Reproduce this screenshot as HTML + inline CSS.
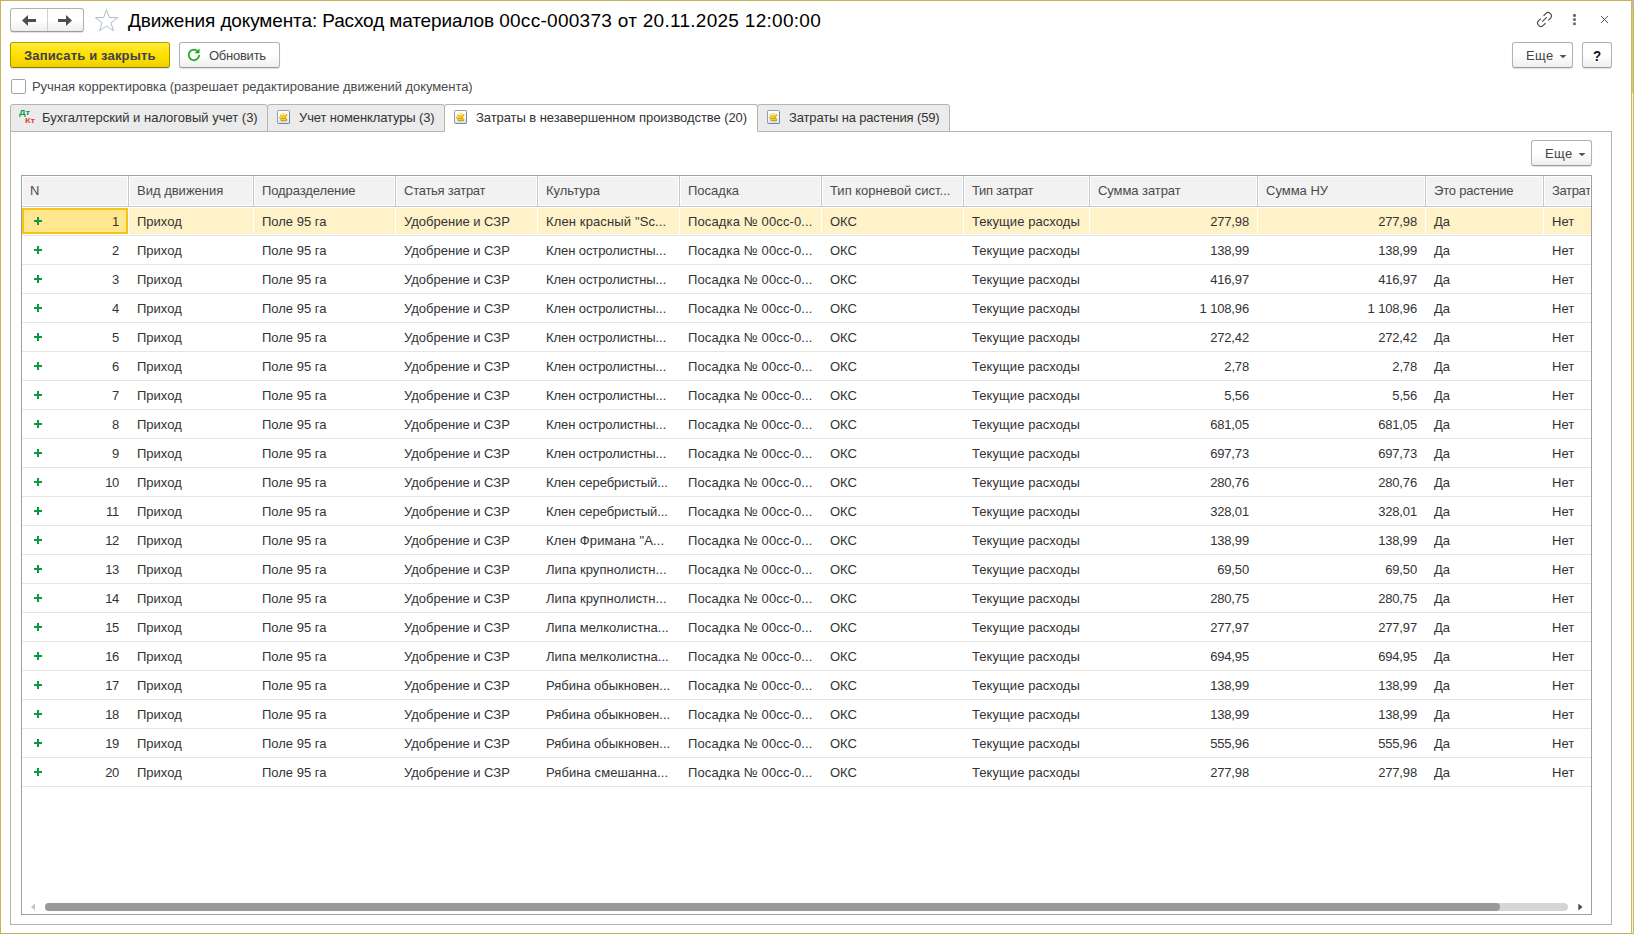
<!DOCTYPE html>
<html lang="ru"><head><meta charset="utf-8"><title>Движения документа</title>
<style>
*{box-sizing:border-box;margin:0;padding:0}
html,body{width:1634px;height:934px;overflow:hidden;background:#fff}
body{position:relative;font-family:"Liberation Sans",sans-serif;font-size:13px;color:#333}
.frame{position:absolute;left:0;top:0;width:1634px;height:934px;border-left:1px solid #c6b45d;border-top:1px solid #c4b25a;border-bottom:1px solid #c6b45d}
.fr1{position:absolute;left:1631px;top:0;width:1px;height:934px;background:#c8b863}
.fr2{position:absolute;left:1632px;top:0;width:1px;height:934px;background:linear-gradient(#c4b25a 0,#c4b25a 1px,#b9c2d3 1px,#b0b8cc 9px,#d6c670 9px,#d6c670 93px,#f4f0de 93px,#f4f0de 933px,#c6b45d 933px)}
.fr3{position:absolute;left:1633px;top:0;width:1px;height:934px;background:#c9b962}
.abs{position:absolute}
svg{position:absolute;overflow:visible;z-index:5}
.btn{position:absolute;height:26px;border:1px solid #b2b2b2;border-bottom-color:#9c9c9c;border-radius:3px;background:linear-gradient(#ffffff 0%,#ffffff 50%,#eeeeee 100%);box-shadow:0 1px 1px rgba(0,0,0,.13);color:#444;font-size:13px;line-height:25px;white-space:nowrap}
.btn.y{background:linear-gradient(#ffea3a 0%,#ffe100 50%,#f0d000 100%);border-color:#b59e00 #a89100 #8f7a00;color:#3e4150;font-weight:bold;box-shadow:0 1px 1px rgba(70,70,120,.16)}
.btn b{position:absolute;top:0;font-weight:inherit}
.title{position:absolute;left:128px;top:10px;font-size:19px;line-height:22px;color:#000;white-space:nowrap;letter-spacing:0.075px}
.chk{position:absolute;left:11px;top:79px;width:15px;height:15px;border:1px solid #a3a3a3;border-radius:2px;background:#fff}
.chklbl{position:absolute;left:32px;top:79px;line-height:15px;font-size:13px;color:#4a4a4a;white-space:nowrap;letter-spacing:-0.06px}
.tab{position:absolute;top:104px;height:28px;border:1px solid #b4b4b4;border-radius:3px 3px 0 0;background:#ebebeb;font-size:13px;line-height:26px;color:#333;white-space:nowrap}
.tab.act{background:#fff;border-bottom-color:#fff;z-index:3}
.tab b{position:absolute;top:0;font-weight:normal}
.panel{position:absolute;left:10px;top:131px;width:1602px;height:794px;border:1px solid #b4b4b4;background:#fff}
.grid{position:absolute;left:21px;top:175px;width:1571px;height:740px;border:1px solid #a0a0a0;background:#fff;overflow:hidden}
.ghead{position:absolute;left:0;top:0;width:1569px;height:31px;background:#fff;border-bottom:1px solid #c8c8c8}
.hc{position:absolute;top:0;height:30px;border:1px solid #fff;background:#f2f2f2;line-height:28px;padding-left:7px;color:#4a4a4a;white-space:nowrap;overflow:hidden}
.hs{position:absolute;top:0;width:1px;height:31px;background:#c6c6c6}
.row{position:absolute;left:0;width:1569px;height:29px;border-bottom:1px solid #e6e6e6}
.c{position:absolute;top:0;height:28px;line-height:29px;padding-left:8px;white-space:nowrap;overflow:hidden;color:#333}
.c.num{text-align:right;padding-right:8px;padding-left:0;word-spacing:0.2px}
.c0{text-align:right;padding-right:9px;padding-left:0;letter-spacing:-0.3px}
.plus{position:absolute;left:12px;top:10px;width:8px;height:8px}
.plus:before{content:"";position:absolute;left:0;top:3px;width:8px;height:2px;background:#0c9a3e}
.plus:after{content:"";position:absolute;left:3px;top:0;width:2px;height:8px;background:#0c9a3e}
.row.sel .c{top:1px;height:26px;line-height:27px;background:#fff2c9}
.row.sel .c0{background:#ffe68f;border:2px solid #f6c414;line-height:23px;padding-right:7px}
.row.sel .plus{left:10px;top:7px}
.dk{position:absolute;font-size:8px;line-height:10px;font-weight:bold;z-index:4;transform:scaleX(1.14);transform-origin:0 0}
</style></head>
<body>
<div class="frame"></div><div class="fr1"></div><div class="fr2"></div><div class="fr3"></div>
<div class="btn" style="left:10px;top:8px;width:74px;height:24px"></div>
<div class="abs" style="left:47px;top:9px;width:1px;height:22px;background:#cfcfcf"></div>
<svg style="left:0;top:0" width="130" height="40" viewBox="0 0 130 40"><path d="M22 20.5L28 15V19H36V22H28V26Z" fill="#4d4d4d"/><path d="M72 20.5L66 15V19H58V22H66V26Z" fill="#4d4d4d"/><polygon points="106.50,9.50 109.27,17.46 117.69,17.63 110.98,22.72 113.42,30.79 106.50,25.98 99.58,30.79 102.02,22.72 95.31,17.63 103.73,17.46" fill="#fff" stroke="#b4bdc5" stroke-width="1"/></svg>
<div class="title"><span style="letter-spacing:-0.125px">Движения документа: Расход материалов </span><span style="letter-spacing:0.285px">00сс-000373 от 20.11.2025 12:00:00</span></div>
<svg style="left:1530px;top:5px" width="90" height="30" viewBox="1530 5 90 30"><g transform="translate(1544.5 19.5) rotate(-45)" fill="none" stroke="#484848" stroke-width="1.15" stroke-linecap="butt"><path d="M-2 -3.3H-5A3.3 3.3 0 0 0 -5 3.3H-2"/><path d="M2 -3.3H5A3.3 3.3 0 0 1 5 3.3H2"/><path d="M-3.1 0H3.1"/></g><circle cx="1574.5" cy="15.4" r="1.55" fill="#6b6b6b"/><circle cx="1574.5" cy="19.55" r="1.55" fill="#6b6b6b"/><circle cx="1574.5" cy="23.7" r="1.55" fill="#6b6b6b"/><path d="M1601 16L1608 23M1608 16L1601 23" stroke="#555" stroke-width="1" fill="none"/></svg>
<div class="btn y" style="left:10px;top:42px;width:160px"><b style="left:13px;letter-spacing:0.15px">Записать и закрыть</b></div>
<div class="btn" style="left:179px;top:42px;width:101px"><b style="left:29px;letter-spacing:-0.25px">Обновить</b></div>
<svg style="left:184px;top:45px" width="20" height="20" viewBox="184 45 20 20"><path d="M196.73 50.5A5.25 5.25 0 1 0 199.15 55.68" fill="none" stroke="#2ba72b" stroke-width="1.8" stroke-linecap="round"/><polygon points="199.5,48.6 199.5,53.3 194.6,53.3" fill="#22a022"/></svg>
<div class="btn" style="left:1512px;top:42px;width:61px"><b style="left:13px;letter-spacing:0.4px">Еще</b></div>
<svg style="left:1559px;top:54px" width="8" height="5" viewBox="0 0 8 5"><path d="M0.5 1H7.5L4 4.3Z" fill="#555"/></svg>
<div class="btn" style="left:1582px;top:42px;width:30px;font-weight:bold;font-size:15.5px;color:#111"><b style="left:10px;top:0px;transform:scaleX(0.86);transform-origin:0 0">?</b></div>
<div class="chk"></div><div class="chklbl">Ручная корректировка (разрешает редактирование движений документа)</div>
<div class="panel"></div>
<div class="tab" style="left:10px;width:258px"><b style="left:31px">Бухгалтерский и налоговый учет (3)</b></div>
<div class="dk" style="left:19px;top:108px;color:#0c9a48">Дт</div>
<div class="dk" style="left:25px;top:116px;color:#e23b3b">Кт</div>
<div class="tab" style="left:267px;width:178px"><b style="left:31px;letter-spacing:-0.12px">Учет номенклатуры (3)</b></div>
<div class="tab act" style="left:444px;width:314px"><b style="left:31px;letter-spacing:-0.07px">Затраты в незавершенном производстве (20)</b></div>
<div class="tab" style="left:757px;width:193px"><b style="left:31px;letter-spacing:-0.15px">Затраты на растения (59)</b></div>
<svg style="left:277px;top:110px" width="13" height="14" viewBox="0 0 13 14"><defs><linearGradient id="cg1" x1="0" y1="0" x2="0" y2="1"><stop offset="0" stop-color="#ffffff"/><stop offset="0.55" stop-color="#f4f9fd"/><stop offset="1" stop-color="#cfe3f4"/></linearGradient></defs><rect x="0.5" y="0.5" width="12" height="13" rx="0.8" fill="url(#cg1)" stroke="#8aa3b8"/><path d="M12.5 1.5V12.5Q12.5 13.5 11.5 13.5H1.5" fill="none" stroke="#6f889c"/><ellipse cx="6.8" cy="9.7" rx="3.5" ry="1.6" fill="#d8950a"/><ellipse cx="6.5" cy="9.2" rx="3.0" ry="1.05" fill="#f6cf2c"/><ellipse cx="5.7" cy="7.5" rx="3.5" ry="1.5" fill="#db990c"/><ellipse cx="5.4" cy="7.0" rx="3.0" ry="1.0" fill="#fbe048"/><ellipse cx="6.8" cy="5.1" rx="3.6" ry="1.7" fill="#df9f10"/><ellipse cx="6.5" cy="4.6" rx="3.1" ry="1.2" fill="#fff16c"/></svg>
<svg style="left:454px;top:110px" width="13" height="14" viewBox="0 0 13 14"><defs><linearGradient id="cg2" x1="0" y1="0" x2="0" y2="1"><stop offset="0" stop-color="#ffffff"/><stop offset="0.55" stop-color="#f4f9fd"/><stop offset="1" stop-color="#cfe3f4"/></linearGradient></defs><rect x="0.5" y="0.5" width="12" height="13" rx="0.8" fill="url(#cg2)" stroke="#8aa3b8"/><path d="M12.5 1.5V12.5Q12.5 13.5 11.5 13.5H1.5" fill="none" stroke="#6f889c"/><ellipse cx="6.8" cy="9.7" rx="3.5" ry="1.6" fill="#d8950a"/><ellipse cx="6.5" cy="9.2" rx="3.0" ry="1.05" fill="#f6cf2c"/><ellipse cx="5.7" cy="7.5" rx="3.5" ry="1.5" fill="#db990c"/><ellipse cx="5.4" cy="7.0" rx="3.0" ry="1.0" fill="#fbe048"/><ellipse cx="6.8" cy="5.1" rx="3.6" ry="1.7" fill="#df9f10"/><ellipse cx="6.5" cy="4.6" rx="3.1" ry="1.2" fill="#fff16c"/></svg>
<svg style="left:767px;top:110px" width="13" height="14" viewBox="0 0 13 14"><defs><linearGradient id="cg3" x1="0" y1="0" x2="0" y2="1"><stop offset="0" stop-color="#ffffff"/><stop offset="0.55" stop-color="#f4f9fd"/><stop offset="1" stop-color="#cfe3f4"/></linearGradient></defs><rect x="0.5" y="0.5" width="12" height="13" rx="0.8" fill="url(#cg3)" stroke="#8aa3b8"/><path d="M12.5 1.5V12.5Q12.5 13.5 11.5 13.5H1.5" fill="none" stroke="#6f889c"/><ellipse cx="6.8" cy="9.7" rx="3.5" ry="1.6" fill="#d8950a"/><ellipse cx="6.5" cy="9.2" rx="3.0" ry="1.05" fill="#f6cf2c"/><ellipse cx="5.7" cy="7.5" rx="3.5" ry="1.5" fill="#db990c"/><ellipse cx="5.4" cy="7.0" rx="3.0" ry="1.0" fill="#fbe048"/><ellipse cx="6.8" cy="5.1" rx="3.6" ry="1.7" fill="#df9f10"/><ellipse cx="6.5" cy="4.6" rx="3.1" ry="1.2" fill="#fff16c"/></svg>
<div class="btn" style="left:1531px;top:140px;width:61px"><b style="left:13px;letter-spacing:0.4px">Еще</b></div>
<svg style="left:1578px;top:152px" width="8" height="5" viewBox="0 0 8 5"><path d="M0.5 1H7.5L4 4.3Z" fill="#555"/></svg>
<div class="grid">
<div class="ghead">
<div class="hc" style="left:0px;width:106px">N</div>
<div class="hc" style="left:107px;width:124px">Вид движения</div><div class="hs" style="left:106px"></div>
<div class="hc" style="left:232px;width:141px;letter-spacing:-0.1px">Подразделение</div><div class="hs" style="left:231px"></div>
<div class="hc" style="left:374px;width:141px;letter-spacing:-0.25px">Статья затрат</div><div class="hs" style="left:373px"></div>
<div class="hc" style="left:516px;width:141px">Культура</div><div class="hs" style="left:515px"></div>
<div class="hc" style="left:658px;width:141px">Посадка</div><div class="hs" style="left:657px"></div>
<div class="hc" style="left:800px;width:141px">Тип корневой сист...</div><div class="hs" style="left:799px"></div>
<div class="hc" style="left:942px;width:125px;letter-spacing:-0.3px">Тип затрат</div><div class="hs" style="left:941px"></div>
<div class="hc" style="left:1068px;width:167px;letter-spacing:-0.07px">Сумма затрат</div><div class="hs" style="left:1067px"></div>
<div class="hc" style="left:1236px;width:167px">Сумма НУ</div><div class="hs" style="left:1235px"></div>
<div class="hc" style="left:1404px;width:117px;letter-spacing:-0.2px">Это растение</div><div class="hs" style="left:1403px"></div>
<div class="hc" style="left:1522px;width:47px;letter-spacing:-0.35px">Затраты</div><div class="hs" style="left:1521px"></div>
</div>
<div class="row sel" style="top:31px">
<div class="c c0" style="left:0px;width:106px"><i class="plus"></i>1</div><div class="c" style="left:107px;width:124px">Приход</div><div class="c" style="left:232px;width:141px">Поле 95 га</div><div class="c" style="left:374px;width:141px">Удобрение и СЗР</div><div class="c" style="left:516px;width:141px;letter-spacing:0.13px">Клен красный "Sc...</div><div class="c" style="left:658px;width:141px;letter-spacing:0.13px">Посадка № 00сс-0...</div><div class="c" style="left:800px;width:141px">ОКС</div><div class="c" style="left:942px;width:125px;letter-spacing:0.07px">Текущие расходы</div><div class="c num" style="left:1068px;width:167px;letter-spacing:-0.15px">277,98</div><div class="c num" style="left:1236px;width:167px;letter-spacing:-0.15px">277,98</div><div class="c" style="left:1404px;width:117px">Да</div><div class="c" style="left:1522px;width:47px">Нет</div>
</div>
<div class="row" style="top:60px">
<div class="c c0" style="left:0px;width:106px"><i class="plus"></i>2</div><div class="c" style="left:107px;width:124px">Приход</div><div class="c" style="left:232px;width:141px">Поле 95 га</div><div class="c" style="left:374px;width:141px">Удобрение и СЗР</div><div class="c" style="left:516px;width:141px;letter-spacing:-0.08px">Клен остролистны...</div><div class="c" style="left:658px;width:141px;letter-spacing:0.13px">Посадка № 00сс-0...</div><div class="c" style="left:800px;width:141px">ОКС</div><div class="c" style="left:942px;width:125px;letter-spacing:0.07px">Текущие расходы</div><div class="c num" style="left:1068px;width:167px;letter-spacing:-0.15px">138,99</div><div class="c num" style="left:1236px;width:167px;letter-spacing:-0.15px">138,99</div><div class="c" style="left:1404px;width:117px">Да</div><div class="c" style="left:1522px;width:47px">Нет</div>
</div>
<div class="row" style="top:89px">
<div class="c c0" style="left:0px;width:106px"><i class="plus"></i>3</div><div class="c" style="left:107px;width:124px">Приход</div><div class="c" style="left:232px;width:141px">Поле 95 га</div><div class="c" style="left:374px;width:141px">Удобрение и СЗР</div><div class="c" style="left:516px;width:141px;letter-spacing:-0.08px">Клен остролистны...</div><div class="c" style="left:658px;width:141px;letter-spacing:0.13px">Посадка № 00сс-0...</div><div class="c" style="left:800px;width:141px">ОКС</div><div class="c" style="left:942px;width:125px;letter-spacing:0.07px">Текущие расходы</div><div class="c num" style="left:1068px;width:167px;letter-spacing:-0.15px">416,97</div><div class="c num" style="left:1236px;width:167px;letter-spacing:-0.15px">416,97</div><div class="c" style="left:1404px;width:117px">Да</div><div class="c" style="left:1522px;width:47px">Нет</div>
</div>
<div class="row" style="top:118px">
<div class="c c0" style="left:0px;width:106px"><i class="plus"></i>4</div><div class="c" style="left:107px;width:124px">Приход</div><div class="c" style="left:232px;width:141px">Поле 95 га</div><div class="c" style="left:374px;width:141px">Удобрение и СЗР</div><div class="c" style="left:516px;width:141px;letter-spacing:-0.08px">Клен остролистны...</div><div class="c" style="left:658px;width:141px;letter-spacing:0.13px">Посадка № 00сс-0...</div><div class="c" style="left:800px;width:141px">ОКС</div><div class="c" style="left:942px;width:125px;letter-spacing:0.07px">Текущие расходы</div><div class="c num" style="left:1068px;width:167px;letter-spacing:-0.15px">1 108,96</div><div class="c num" style="left:1236px;width:167px;letter-spacing:-0.15px">1 108,96</div><div class="c" style="left:1404px;width:117px">Да</div><div class="c" style="left:1522px;width:47px">Нет</div>
</div>
<div class="row" style="top:147px">
<div class="c c0" style="left:0px;width:106px"><i class="plus"></i>5</div><div class="c" style="left:107px;width:124px">Приход</div><div class="c" style="left:232px;width:141px">Поле 95 га</div><div class="c" style="left:374px;width:141px">Удобрение и СЗР</div><div class="c" style="left:516px;width:141px;letter-spacing:-0.08px">Клен остролистны...</div><div class="c" style="left:658px;width:141px;letter-spacing:0.13px">Посадка № 00сс-0...</div><div class="c" style="left:800px;width:141px">ОКС</div><div class="c" style="left:942px;width:125px;letter-spacing:0.07px">Текущие расходы</div><div class="c num" style="left:1068px;width:167px;letter-spacing:-0.15px">272,42</div><div class="c num" style="left:1236px;width:167px;letter-spacing:-0.15px">272,42</div><div class="c" style="left:1404px;width:117px">Да</div><div class="c" style="left:1522px;width:47px">Нет</div>
</div>
<div class="row" style="top:176px">
<div class="c c0" style="left:0px;width:106px"><i class="plus"></i>6</div><div class="c" style="left:107px;width:124px">Приход</div><div class="c" style="left:232px;width:141px">Поле 95 га</div><div class="c" style="left:374px;width:141px">Удобрение и СЗР</div><div class="c" style="left:516px;width:141px;letter-spacing:-0.08px">Клен остролистны...</div><div class="c" style="left:658px;width:141px;letter-spacing:0.13px">Посадка № 00сс-0...</div><div class="c" style="left:800px;width:141px">ОКС</div><div class="c" style="left:942px;width:125px;letter-spacing:0.07px">Текущие расходы</div><div class="c num" style="left:1068px;width:167px;letter-spacing:-0.15px">2,78</div><div class="c num" style="left:1236px;width:167px;letter-spacing:-0.15px">2,78</div><div class="c" style="left:1404px;width:117px">Да</div><div class="c" style="left:1522px;width:47px">Нет</div>
</div>
<div class="row" style="top:205px">
<div class="c c0" style="left:0px;width:106px"><i class="plus"></i>7</div><div class="c" style="left:107px;width:124px">Приход</div><div class="c" style="left:232px;width:141px">Поле 95 га</div><div class="c" style="left:374px;width:141px">Удобрение и СЗР</div><div class="c" style="left:516px;width:141px;letter-spacing:-0.08px">Клен остролистны...</div><div class="c" style="left:658px;width:141px;letter-spacing:0.13px">Посадка № 00сс-0...</div><div class="c" style="left:800px;width:141px">ОКС</div><div class="c" style="left:942px;width:125px;letter-spacing:0.07px">Текущие расходы</div><div class="c num" style="left:1068px;width:167px;letter-spacing:-0.15px">5,56</div><div class="c num" style="left:1236px;width:167px;letter-spacing:-0.15px">5,56</div><div class="c" style="left:1404px;width:117px">Да</div><div class="c" style="left:1522px;width:47px">Нет</div>
</div>
<div class="row" style="top:234px">
<div class="c c0" style="left:0px;width:106px"><i class="plus"></i>8</div><div class="c" style="left:107px;width:124px">Приход</div><div class="c" style="left:232px;width:141px">Поле 95 га</div><div class="c" style="left:374px;width:141px">Удобрение и СЗР</div><div class="c" style="left:516px;width:141px;letter-spacing:-0.08px">Клен остролистны...</div><div class="c" style="left:658px;width:141px;letter-spacing:0.13px">Посадка № 00сс-0...</div><div class="c" style="left:800px;width:141px">ОКС</div><div class="c" style="left:942px;width:125px;letter-spacing:0.07px">Текущие расходы</div><div class="c num" style="left:1068px;width:167px;letter-spacing:-0.15px">681,05</div><div class="c num" style="left:1236px;width:167px;letter-spacing:-0.15px">681,05</div><div class="c" style="left:1404px;width:117px">Да</div><div class="c" style="left:1522px;width:47px">Нет</div>
</div>
<div class="row" style="top:263px">
<div class="c c0" style="left:0px;width:106px"><i class="plus"></i>9</div><div class="c" style="left:107px;width:124px">Приход</div><div class="c" style="left:232px;width:141px">Поле 95 га</div><div class="c" style="left:374px;width:141px">Удобрение и СЗР</div><div class="c" style="left:516px;width:141px;letter-spacing:-0.08px">Клен остролистны...</div><div class="c" style="left:658px;width:141px;letter-spacing:0.13px">Посадка № 00сс-0...</div><div class="c" style="left:800px;width:141px">ОКС</div><div class="c" style="left:942px;width:125px;letter-spacing:0.07px">Текущие расходы</div><div class="c num" style="left:1068px;width:167px;letter-spacing:-0.15px">697,73</div><div class="c num" style="left:1236px;width:167px;letter-spacing:-0.15px">697,73</div><div class="c" style="left:1404px;width:117px">Да</div><div class="c" style="left:1522px;width:47px">Нет</div>
</div>
<div class="row" style="top:292px">
<div class="c c0" style="left:0px;width:106px"><i class="plus"></i>10</div><div class="c" style="left:107px;width:124px">Приход</div><div class="c" style="left:232px;width:141px">Поле 95 га</div><div class="c" style="left:374px;width:141px">Удобрение и СЗР</div><div class="c" style="left:516px;width:141px;letter-spacing:-0.06px">Клен серебристый...</div><div class="c" style="left:658px;width:141px;letter-spacing:0.13px">Посадка № 00сс-0...</div><div class="c" style="left:800px;width:141px">ОКС</div><div class="c" style="left:942px;width:125px;letter-spacing:0.07px">Текущие расходы</div><div class="c num" style="left:1068px;width:167px;letter-spacing:-0.15px">280,76</div><div class="c num" style="left:1236px;width:167px;letter-spacing:-0.15px">280,76</div><div class="c" style="left:1404px;width:117px">Да</div><div class="c" style="left:1522px;width:47px">Нет</div>
</div>
<div class="row" style="top:321px">
<div class="c c0" style="left:0px;width:106px"><i class="plus"></i>11</div><div class="c" style="left:107px;width:124px">Приход</div><div class="c" style="left:232px;width:141px">Поле 95 га</div><div class="c" style="left:374px;width:141px">Удобрение и СЗР</div><div class="c" style="left:516px;width:141px;letter-spacing:-0.06px">Клен серебристый...</div><div class="c" style="left:658px;width:141px;letter-spacing:0.13px">Посадка № 00сс-0...</div><div class="c" style="left:800px;width:141px">ОКС</div><div class="c" style="left:942px;width:125px;letter-spacing:0.07px">Текущие расходы</div><div class="c num" style="left:1068px;width:167px;letter-spacing:-0.15px">328,01</div><div class="c num" style="left:1236px;width:167px;letter-spacing:-0.15px">328,01</div><div class="c" style="left:1404px;width:117px">Да</div><div class="c" style="left:1522px;width:47px">Нет</div>
</div>
<div class="row" style="top:350px">
<div class="c c0" style="left:0px;width:106px"><i class="plus"></i>12</div><div class="c" style="left:107px;width:124px">Приход</div><div class="c" style="left:232px;width:141px">Поле 95 га</div><div class="c" style="left:374px;width:141px">Удобрение и СЗР</div><div class="c" style="left:516px;width:141px;letter-spacing:0.13px">Клен Фримана "A...</div><div class="c" style="left:658px;width:141px;letter-spacing:0.13px">Посадка № 00сс-0...</div><div class="c" style="left:800px;width:141px">ОКС</div><div class="c" style="left:942px;width:125px;letter-spacing:0.07px">Текущие расходы</div><div class="c num" style="left:1068px;width:167px;letter-spacing:-0.15px">138,99</div><div class="c num" style="left:1236px;width:167px;letter-spacing:-0.15px">138,99</div><div class="c" style="left:1404px;width:117px">Да</div><div class="c" style="left:1522px;width:47px">Нет</div>
</div>
<div class="row" style="top:379px">
<div class="c c0" style="left:0px;width:106px"><i class="plus"></i>13</div><div class="c" style="left:107px;width:124px">Приход</div><div class="c" style="left:232px;width:141px">Поле 95 га</div><div class="c" style="left:374px;width:141px">Удобрение и СЗР</div><div class="c" style="left:516px;width:141px;letter-spacing:0.06px">Липа крупнолистн...</div><div class="c" style="left:658px;width:141px;letter-spacing:0.13px">Посадка № 00сс-0...</div><div class="c" style="left:800px;width:141px">ОКС</div><div class="c" style="left:942px;width:125px;letter-spacing:0.07px">Текущие расходы</div><div class="c num" style="left:1068px;width:167px;letter-spacing:-0.15px">69,50</div><div class="c num" style="left:1236px;width:167px;letter-spacing:-0.15px">69,50</div><div class="c" style="left:1404px;width:117px">Да</div><div class="c" style="left:1522px;width:47px">Нет</div>
</div>
<div class="row" style="top:408px">
<div class="c c0" style="left:0px;width:106px"><i class="plus"></i>14</div><div class="c" style="left:107px;width:124px">Приход</div><div class="c" style="left:232px;width:141px">Поле 95 га</div><div class="c" style="left:374px;width:141px">Удобрение и СЗР</div><div class="c" style="left:516px;width:141px;letter-spacing:0.06px">Липа крупнолистн...</div><div class="c" style="left:658px;width:141px;letter-spacing:0.13px">Посадка № 00сс-0...</div><div class="c" style="left:800px;width:141px">ОКС</div><div class="c" style="left:942px;width:125px;letter-spacing:0.07px">Текущие расходы</div><div class="c num" style="left:1068px;width:167px;letter-spacing:-0.15px">280,75</div><div class="c num" style="left:1236px;width:167px;letter-spacing:-0.15px">280,75</div><div class="c" style="left:1404px;width:117px">Да</div><div class="c" style="left:1522px;width:47px">Нет</div>
</div>
<div class="row" style="top:437px">
<div class="c c0" style="left:0px;width:106px"><i class="plus"></i>15</div><div class="c" style="left:107px;width:124px">Приход</div><div class="c" style="left:232px;width:141px">Поле 95 га</div><div class="c" style="left:374px;width:141px">Удобрение и СЗР</div><div class="c" style="left:516px;width:141px;letter-spacing:0.02px">Липа мелколистна...</div><div class="c" style="left:658px;width:141px;letter-spacing:0.13px">Посадка № 00сс-0...</div><div class="c" style="left:800px;width:141px">ОКС</div><div class="c" style="left:942px;width:125px;letter-spacing:0.07px">Текущие расходы</div><div class="c num" style="left:1068px;width:167px;letter-spacing:-0.15px">277,97</div><div class="c num" style="left:1236px;width:167px;letter-spacing:-0.15px">277,97</div><div class="c" style="left:1404px;width:117px">Да</div><div class="c" style="left:1522px;width:47px">Нет</div>
</div>
<div class="row" style="top:466px">
<div class="c c0" style="left:0px;width:106px"><i class="plus"></i>16</div><div class="c" style="left:107px;width:124px">Приход</div><div class="c" style="left:232px;width:141px">Поле 95 га</div><div class="c" style="left:374px;width:141px">Удобрение и СЗР</div><div class="c" style="left:516px;width:141px;letter-spacing:0.02px">Липа мелколистна...</div><div class="c" style="left:658px;width:141px;letter-spacing:0.13px">Посадка № 00сс-0...</div><div class="c" style="left:800px;width:141px">ОКС</div><div class="c" style="left:942px;width:125px;letter-spacing:0.07px">Текущие расходы</div><div class="c num" style="left:1068px;width:167px;letter-spacing:-0.15px">694,95</div><div class="c num" style="left:1236px;width:167px;letter-spacing:-0.15px">694,95</div><div class="c" style="left:1404px;width:117px">Да</div><div class="c" style="left:1522px;width:47px">Нет</div>
</div>
<div class="row" style="top:495px">
<div class="c c0" style="left:0px;width:106px"><i class="plus"></i>17</div><div class="c" style="left:107px;width:124px">Приход</div><div class="c" style="left:232px;width:141px">Поле 95 га</div><div class="c" style="left:374px;width:141px">Удобрение и СЗР</div><div class="c" style="left:516px;width:141px">Рябина обыкновен...</div><div class="c" style="left:658px;width:141px;letter-spacing:0.13px">Посадка № 00сс-0...</div><div class="c" style="left:800px;width:141px">ОКС</div><div class="c" style="left:942px;width:125px;letter-spacing:0.07px">Текущие расходы</div><div class="c num" style="left:1068px;width:167px;letter-spacing:-0.15px">138,99</div><div class="c num" style="left:1236px;width:167px;letter-spacing:-0.15px">138,99</div><div class="c" style="left:1404px;width:117px">Да</div><div class="c" style="left:1522px;width:47px">Нет</div>
</div>
<div class="row" style="top:524px">
<div class="c c0" style="left:0px;width:106px"><i class="plus"></i>18</div><div class="c" style="left:107px;width:124px">Приход</div><div class="c" style="left:232px;width:141px">Поле 95 га</div><div class="c" style="left:374px;width:141px">Удобрение и СЗР</div><div class="c" style="left:516px;width:141px">Рябина обыкновен...</div><div class="c" style="left:658px;width:141px;letter-spacing:0.13px">Посадка № 00сс-0...</div><div class="c" style="left:800px;width:141px">ОКС</div><div class="c" style="left:942px;width:125px;letter-spacing:0.07px">Текущие расходы</div><div class="c num" style="left:1068px;width:167px;letter-spacing:-0.15px">138,99</div><div class="c num" style="left:1236px;width:167px;letter-spacing:-0.15px">138,99</div><div class="c" style="left:1404px;width:117px">Да</div><div class="c" style="left:1522px;width:47px">Нет</div>
</div>
<div class="row" style="top:553px">
<div class="c c0" style="left:0px;width:106px"><i class="plus"></i>19</div><div class="c" style="left:107px;width:124px">Приход</div><div class="c" style="left:232px;width:141px">Поле 95 га</div><div class="c" style="left:374px;width:141px">Удобрение и СЗР</div><div class="c" style="left:516px;width:141px">Рябина обыкновен...</div><div class="c" style="left:658px;width:141px;letter-spacing:0.13px">Посадка № 00сс-0...</div><div class="c" style="left:800px;width:141px">ОКС</div><div class="c" style="left:942px;width:125px;letter-spacing:0.07px">Текущие расходы</div><div class="c num" style="left:1068px;width:167px;letter-spacing:-0.15px">555,96</div><div class="c num" style="left:1236px;width:167px;letter-spacing:-0.15px">555,96</div><div class="c" style="left:1404px;width:117px">Да</div><div class="c" style="left:1522px;width:47px">Нет</div>
</div>
<div class="row" style="top:582px">
<div class="c c0" style="left:0px;width:106px"><i class="plus"></i>20</div><div class="c" style="left:107px;width:124px">Приход</div><div class="c" style="left:232px;width:141px">Поле 95 га</div><div class="c" style="left:374px;width:141px">Удобрение и СЗР</div><div class="c" style="left:516px;width:141px;letter-spacing:0.08px">Рябина смешанна...</div><div class="c" style="left:658px;width:141px;letter-spacing:0.13px">Посадка № 00сс-0...</div><div class="c" style="left:800px;width:141px">ОКС</div><div class="c" style="left:942px;width:125px;letter-spacing:0.07px">Текущие расходы</div><div class="c num" style="left:1068px;width:167px;letter-spacing:-0.15px">277,98</div><div class="c num" style="left:1236px;width:167px;letter-spacing:-0.15px">277,98</div><div class="c" style="left:1404px;width:117px">Да</div><div class="c" style="left:1522px;width:47px">Нет</div>
</div>
<div class="abs" style="left:23px;top:727px;width:1523px;height:8px;border-radius:4px;background:#d5d5d5"></div>
<div class="abs" style="left:23px;top:727px;width:1455px;height:8px;border-radius:4px;background:#999"></div>
<svg style="left:9px;top:727px" width="5" height="8" viewBox="0 0 5 8"><path d="M4 0.5V7.5L0 4Z" fill="#c4c4c4"/></svg>
<svg style="left:1556px;top:727px" width="5" height="8" viewBox="0 0 5 8"><path d="M0.3 0.5V7.5L4.5 4Z" fill="#4a4a4a"/></svg>
</div>
</body></html>
